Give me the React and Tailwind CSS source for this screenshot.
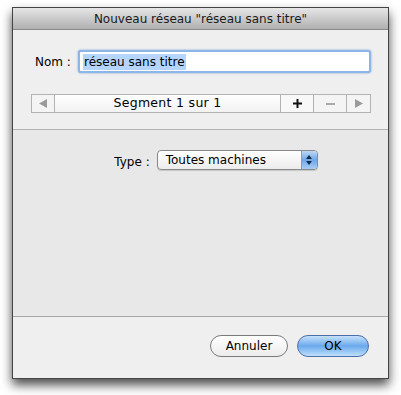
export default function App() {
  const font = { fontFamily: '"Lucida Grande", "DejaVu Sans", sans-serif' };
  return (
    <div className="w-[401px] h-[395px] bg-white pl-[12px] pt-[7px]" style={font}>
      <div className="w-[377px] h-[372px] flex flex-col border border-[#444] bg-[#ececec] shadow-[0_6px_10px_rgba(0,0,0,0.7)]">
        {/* Title bar */}
        <div className="h-[22px] flex items-center justify-center bg-gradient-to-b from-[#e6e6e6] to-[#b0b0b0] border-b border-[#8a8a8a] text-[12px] text-[#1a1a1a]">
          Nouveau réseau "réseau sans titre"
        </div>

        {/* Name + segment */}
        <div className="h-[100px] bg-[#efefef] border-b border-[#b4b4b4] flex flex-col">
          <div className="flex items-center pl-[22px] pr-[17px] pt-[20px]">
            <span className="text-[12px] text-black w-[43px]">Nom :</span>
            <div className="flex-1 h-[23px] rounded-[3px] border-2 border-[#8db5e8] shadow-[0_0_2px_#6a9ad6] bg-white flex items-center pl-[3px]">
              <span className="text-[12px] bg-[#b5d5ff] px-[1px] leading-[16px]">réseau sans titre</span>
            </div>
          </div>
          <div className="mt-[21px] ml-[18px] mr-[17px] h-[19px] flex border border-[#b3b3b3] text-[12.5px]">
            <div className="w-[23px] flex items-center justify-center border-r border-[#b3b3b3] bg-[#f4f4f4]">
              <svg width="8" height="9" viewBox="0 0 8 9"><path d="M8 0 L0 4.5 L8 9 Z" fill="#9a9a9a" /></svg>
            </div>
            <div className="flex-1 flex items-center justify-center bg-gradient-to-b from-white to-[#f2f2f2] border-r border-[#b3b3b3] tracking-[0.3px]">
              Segment 1 sur 1
            </div>
            <div className="w-[33px] flex items-center justify-center border-r border-[#b3b3b3] bg-[#f8f8f8]">
              <svg width="9" height="9" viewBox="0 0 9 9"><path d="M4.5 0 V9 M0 4.5 H9" stroke="#111" strokeWidth="2" /></svg>
            </div>
            <div className="w-[33px] flex items-center justify-center border-r border-[#b3b3b3] bg-[#f4f4f4]">
              <svg width="9" height="2" viewBox="0 0 9 2"><path d="M0 1 H9" stroke="#aaa" strokeWidth="2" /></svg>
            </div>
            <div className="flex-1 max-w-[23px] flex items-center justify-center bg-[#f4f4f4]">
              <svg width="8" height="9" viewBox="0 0 8 9"><path d="M0 0 L8 4.5 L0 9 Z" fill="#9a9a9a" /></svg>
            </div>
          </div>
        </div>

        {/* Type */}
        <div className="h-[187px] bg-[#e8e8e8] border-b border-[#a8a8a8] flex justify-center pt-[20px] pl-[31px]">
          <div className="flex items-start">
            <span className="text-[12px] mt-[3px] mr-[7px]">Type :</span>
            <div className="w-[161px] h-[20px] rounded-[4px] border border-[#8a8a8a] bg-gradient-to-b from-white to-[#ececec] flex items-center shadow-[0_1px_1px_rgba(0,0,0,0.15)]">
              <span className="flex-1 pl-[8px] text-[12px]">Toutes machines</span>
              <div className="w-[16px] h-full rounded-r-[4px] bg-gradient-to-b from-[#bcd8f5] via-[#6fa6e8] to-[#a8cdf4] border-l border-[#7b9ec9] flex flex-col items-center justify-center gap-[2px]">
                <svg width="6" height="4" viewBox="0 0 6 4"><path d="M3 0 L6 4 L0 4 Z" fill="#102a4c" /></svg>
                <svg width="6" height="4" viewBox="0 0 6 4"><path d="M0 0 L6 0 L3 4 Z" fill="#102a4c" /></svg>
              </div>
            </div>
          </div>
        </div>

        {/* Buttons */}
        <div className="flex-1 bg-[#efefef] flex justify-end items-start pt-[18px] pr-[19px] gap-[9px]">
          <div className="w-[78px] h-[22px] rounded-full border border-[#7a7a7a] bg-gradient-to-b from-white to-[#ececec] flex items-center justify-center text-[12px]">
            Annuler
          </div>
          <div className="w-[72px] h-[22px] rounded-full border border-[#4a6ea8] bg-gradient-to-b from-[#c6e0fa] via-[#6aa9ec] to-[#bfe0fc] flex items-center justify-center text-[12px]">
            OK
          </div>
        </div>
      </div>
    </div>
  );
}
